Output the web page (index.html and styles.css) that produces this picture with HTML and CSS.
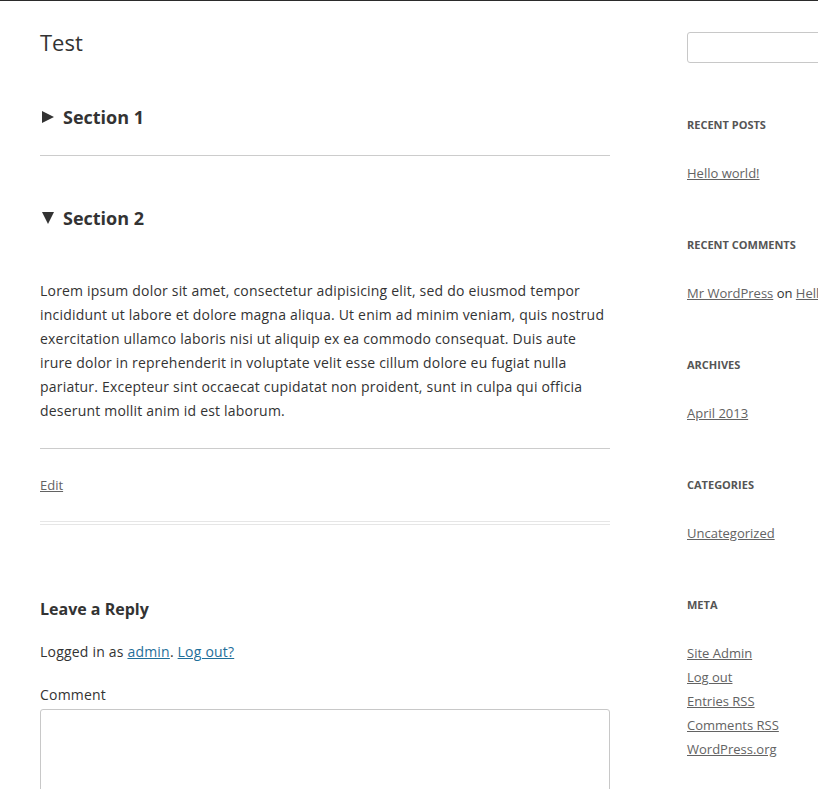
FILE: index.html
```html
<!DOCTYPE html>
<html lang="en">
<head>
<meta charset="utf-8">
<title>Test</title>
<link rel="stylesheet" href="styles.css">
</head>
<body>
<div class="page">
  <main class="content">
    <h1 class="entry-title">Test</h1>
    <h2 class="section-title"><span class="tri tri-right"></span>Section 1</h2>
    <hr class="rule rule-a">
    <h2 class="section-title sec2"><span class="tri tri-down"></span>Section 2</h2>
    <p class="body-text">Lorem ipsum dolor sit amet, consectetur adipisicing elit, sed do eiusmod tempor incididunt ut labore et dolore magna aliqua. Ut enim ad minim veniam, quis nostrud exercitation ullamco laboris nisi ut aliquip ex ea commodo consequat. Duis aute irure dolor in reprehenderit in voluptate velit esse cillum dolore eu fugiat nulla pariatur. Excepteur sint occaecat cupidatat non proident, sunt in culpa qui officia deserunt mollit anim id est laborum.</p>
    <hr class="rule rule-b">
    <div class="edit-row"><a href="#" class="muted-link">Edit</a></div>
    <div class="double-rule"></div>
    <h3 class="reply-title">Leave a Reply</h3>
    <p class="logged">Logged in as <a href="#" class="blue-link">admin</a>. <a href="#" class="blue-link">Log out?</a></p>
    <label class="comment-label" for="c">Comment</label>
    <textarea id="c" class="comment-box"></textarea>
  </main>
  <aside class="sidebar">
    <input class="search" type="text" aria-label="Search">
    <section class="widget first">
      <h4 class="widget-title">Recent Posts</h4>
      <ul class="widget-list"><li><a href="#" class="muted-link">Hello world!</a></li></ul>
    </section>
    <section class="widget">
      <h4 class="widget-title">Recent Comments</h4>
      <ul class="widget-list"><li><a href="#" class="muted-link">Mr WordPress</a> on <a href="#" class="muted-link">Hello world!</a></li></ul>
    </section>
    <section class="widget">
      <h4 class="widget-title">Archives</h4>
      <ul class="widget-list"><li><a href="#" class="muted-link">April 2013</a></li></ul>
    </section>
    <section class="widget">
      <h4 class="widget-title">Categories</h4>
      <ul class="widget-list"><li><a href="#" class="muted-link">Uncategorized</a></li></ul>
    </section>
    <section class="widget">
      <h4 class="widget-title">Meta</h4>
      <ul class="widget-list">
        <li><a href="#" class="muted-link">Site Admin</a></li>
        <li><a href="#" class="muted-link">Log out</a></li>
        <li><a href="#" class="muted-link">Entries RSS</a></li>
        <li><a href="#" class="muted-link">Comments RSS</a></li>
        <li><a href="#" class="muted-link">WordPress.org</a></li>
      </ul>
    </section>
  </aside>
</div>
</body>
</html>
```
FILE: styles.css
```css
html {
  overflow: hidden;
}
body {
  margin: 0;
  border-top: 1px solid #2b2b2b;
  background: #fff;
  color: #333;
  font-family: "Open Sans", "Noto Sans", sans-serif;
}
.page {
  display: flex;
  align-items: flex-start;
  width: 1000px;
}
.content {
  width: 570px;
  margin-left: 40px;
  flex: none;
}
.entry-title {
  margin: 0;
  padding-top: 26px;
  font-size: 22px;
  line-height: 30px;
  font-weight: 400;
  color: #333;
}
.section-title {
  margin: 48px 0 0;
  font-size: 18px;
  line-height: 24px;
  font-weight: 700;
  color: #333;
  display: flex;
  align-items: center;
}
.section-title.sec2 {
  margin-top: 50px;
}
.tri {
  display: inline-block;
  width: 0;
  height: 0;
  margin-left: 2px;
  margin-right: 9px;
}
.tri-right {
  border-top: 6px solid transparent;
  border-bottom: 6px solid transparent;
  border-left: 12px solid #333;
}
.tri-down {
  border-left: 6px solid transparent;
  border-right: 6px solid transparent;
  border-top: 12px solid #333;
}
.rule {
  border: 0;
  height: 1px;
  background: #ccc;
  margin: 0;
}
.rule-a {
  margin-top: 26px;
}
.body-text {
  margin: 49px 0 0;
  font-size: 14px;
  line-height: 24px;
  letter-spacing: 0.2px;
  color: #333;
}
.rule-b {
  margin-top: 25px;
}
.edit-row {
  margin-top: 26px;
  font-size: 13px;
  line-height: 20px;
}
.muted-link {
  color: #636363;
  text-decoration: underline;
}
.double-rule {
  margin-top: 26px;
  height: 2px;
  border-top: 1px solid #e6e6e6;
  border-bottom: 1px solid #e6e6e6;
}
.reply-title {
  margin: 72px 0 0;
  font-size: 16px;
  line-height: 24px;
  font-weight: 700;
  color: #333;
}
.logged {
  margin: 19px 0 0;
  font-size: 14px;
  line-height: 24px;
  letter-spacing: 0.2px;
}
.blue-link {
  color: #1f6f9a;
  text-decoration: underline;
}
.comment-label {
  display: block;
  margin-top: 19px;
  font-size: 14px;
  line-height: 24px;
  letter-spacing: 0.2px;
}
.comment-box {
  display: block;
  box-sizing: border-box;
  margin-top: 2px;
  width: 570px;
  height: 150px;
  border: 1px solid #c8c8c8;
  border-radius: 3px;
  resize: none;
  font-family: inherit;
}
.sidebar {
  margin-left: 77px;
  width: 240px;
  flex: none;
  padding-top: 31px;
}
.search {
  display: block;
  box-sizing: border-box;
  width: 240px;
  height: 31px;
  margin: 0;
  border: 1px solid #c8c8c8;
  border-radius: 3px;
}
.widget {
  margin-top: 52px;
}
.widget.first {
  margin-top: 54px;
}
.widget-title {
  margin: 0;
  font-size: 11px;
  line-height: 16px;
  font-weight: 700;
  text-transform: uppercase;
  color: #555;
}
.widget-list {
  list-style: none;
  margin: 28px 0 0;
  padding: 0;
  font-size: 13px;
  line-height: 24px;
  color: #333;
  white-space: nowrap;
}
```
